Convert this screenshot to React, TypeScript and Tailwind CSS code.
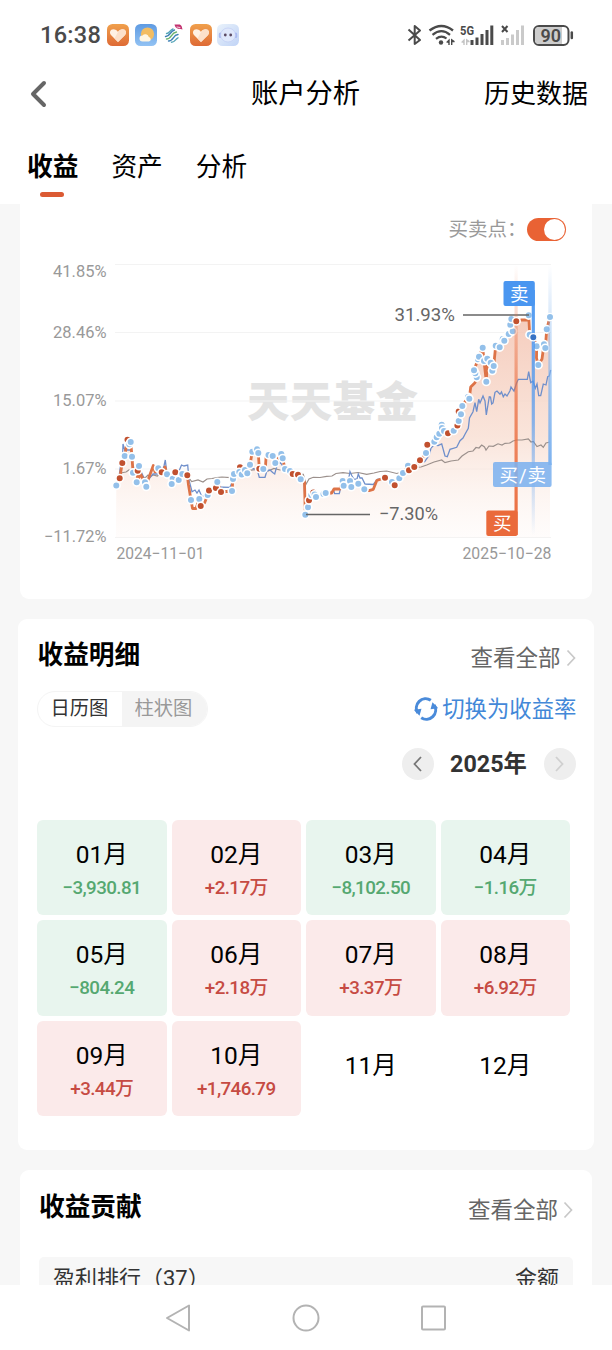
import clsx from 'clsx';

type Dot = [number, number, 'b' | 'r' | 'd' | '-'];

// Account curve. 'b' = sell, 'r' = buy, 'd' = selected, '-' = no trade on that day
const CURVE: Dot[] = [
    [116.3, 485.5, 'b'], [119.7, 478.3, 'r'], [122.3, 463, 'r'], [124.7, 456, 'b'], [127.5, 439.7, 'r'],
    [129.3, 444.3, 'b'], [130.7, 442, 'b'], [132, 456.7, 'b'], [133, 472.7, 'b'], [137.7, 470.7, 'r'],
    [139, 466, 'b'], [136.7, 482.3, 'b'], [140.5, 474, '-'], [143, 479, '-'], [145, 482.3, 'b'], [146.3, 486.7, 'b'],
    [148, 480, '-'], [153.3, 465.5, '-'], [155, 472, '-'], [158.3, 468.3, 'b'], [161.7, 472.3, 'r'],
    [165, 467, '-'], [167, 474.3, 'b'], [172.7, 478.7, 'b'], [171.7, 484, 'b'], [175.3, 472.3, 'r'],
    [178.7, 480, 'b'], [182.3, 474, 'b'], [187.3, 475.3, 'r'], [188.5, 485, '-'], [191, 500, 'b'],
    [192.5, 508.5, '-'], [196, 508.5, '-'], [199.3, 499, 'b'], [200.7, 506, 'r'], [204.5, 503, '-'],
    [207.7, 495, 'b'], [209, 490.5, 'r'], [215.9, 488, 'r'], [217.3, 482, 'b'], [221, 492, 'r'],
    [232, 491, 'b'], [233, 479, 'b'], [234, 474, 'b'], [240, 467.3, 'r'], [239.3, 472, 'b'],
    [241.7, 474.6, 'b'], [245, 470, 'b'], [247.3, 473.3, 'b'], [250, 464.7, 'b'], [252.3, 451.7, 'b'],
    [257, 449.3, 'b'], [258.3, 453, 'b'], [259.3, 468.7, 'r'], [263.3, 469, 'b'], [265.5, 466, '-'],
    [266, 458, '-'], [268.5, 455, 'b'], [272.7, 456, 'b'], [275.3, 463, 'b'], [281.3, 454, 'b'],
    [282.7, 458.3, 'b'], [285, 469, 'b'], [290, 471, 'b'], [292.7, 474, 'r'], [298, 474.7, 'r'],
    [300.7, 479.3, 'b'], [304.5, 482, '-'], [305.3, 514.7, 'b'], [308, 507.3, 'b'], [309, 500.3, 'r'],
    [311.3, 495, 'b'], [313.3, 492.5, 'r'], [314.6, 494.5, 'b'], [316, 497, 'b'], [323.5, 494, 'b'],
    [325.7, 493, 'b'], [331.7, 493, '-'], [334, 489, '-'], [340, 489, '-'], [342.7, 481, 'b'],
    [343.7, 485.7, 'b'], [350, 481, 'b'], [351.3, 487, 'b'], [358.3, 483.7, 'b'], [364.3, 489.3, 'b'],
    [369, 490.7, '-'], [373.3, 489.3, '-'], [376.8, 480.5, '-'], [385, 477.7, 'r'], [392, 482, 'b'],
    [394.7, 485.3, 'r'], [399.3, 478.3, 'b'], [403, 473, 'b'], [408, 465.7, 'b'], [409, 470.3, 'r'],
    [414.3, 467, 'r'], [420, 460.3, 'r'], [426, 453, 'b'], [427.3, 444.7, 'r'], [434.3, 441.7, 'b'],
    [436.7, 437.3, 'b'], [439.3, 433.7, 'b'], [441.7, 424.7, 'b'], [442, 428, 'b'], [444, 431, 'b'],
    [448, 433.3, 'r'], [453.7, 430.7, 'b'], [457.4, 425.5, 'r'], [458.7, 421, 'b'], [458.7, 411.500, 'r'],
    [461, 414.3, 'b'], [462.3, 406, 'b'], [468, 397, 'b'], [469.3, 398.7, 'b'], [470.7, 387, '-'],
    [475, 382.7, '-'], [476.7, 377.3, 'b'], [475.3, 373.3, 'b'], [474, 370.3, 'b'], [478, 359.3, 'b'],
    [479, 356.7, 'b'], [482.7, 347.7, 'b'], [484, 361, 'b'], [486.3, 381.7, 'b'], [487.3, 358.7, 'b'],
    [490.7, 362.7, 'b'], [492.3, 370.7, 'b'], [493.7, 366, 'b'], [495.7, 345.7, 'b'], [499.7, 347.3, 'b'],
    [502.7, 339, 'b'], [504.3, 340.7, 'b'], [508.7, 334, 'b'], [512.7, 331.3, 'b'], [510.3, 324.7, 'b'],
    [511.3, 319, 'b'], [516.3, 321.3, 'r'], [521, 320, '-'], [528, 320, '-'], [528.7, 315.3, 'b'],
    [529.7, 334.7, 'b'], [533.3, 337.3, 'd'], [536.7, 346.3, 'b'], [536.5, 358, '-'], [538.3, 365, 'b'],
    [542, 359, '-'], [544, 344.3, 'b'], [545.3, 348, 'b'], [546.7, 329.3, 'b'], [550, 317, 'b'],
];

const DOT_FILL = { b: '#93c0ea', r: '#c1502e', d: '#3873c4' };

const BLUE_LINE =
    'M116 485L119 477L121 462L122.5 460L123 444L125 451L126 450L131 450L132 463L135 470L139 467L144 478L148 480L153 474L158 474L161 471L164 466L165.3 460L166.5 470L170 477L175 474L179 471L180.7 467L181.5 465L184 466L187.7 465L189 480L192 491.7L195 490L197 493L199 490L202 497L206 494L210 490L216 487L230 487.3L233 480L238 472L246 468L257 469L259.3 477.3L265 477.3L267 470.5L270 470L272.7 472.5L274.7 474L276.7 466.7L280 462L284 468L290 471L300 478L304 481L305.5 513L309 500L315 494L325 494L331 493L333.7 490.7L334.7 493.7L339.3 493.7L341 486L346.7 480L349 477L350 471.7L352 476L354 479.3L357 479L358.3 474L360 478L362 478L365 484L373.3 484.5L377.3 479.3L385 478L395 484L402 473L410 469L420 462L424.7 461.7L429.3 455L431 448L434 445L438 445.5L441.7 443.8L445 456L447.3 456.7L450 449.3L456.7 447.3L460 440.7L463 438L465 434.3L468.3 428.3L469.5 418L473 411.7L475 402.7L476.7 411.7L478.7 399.3L480 403L483 396L485 401L486.3 415L489.3 396.7L490.5 397L491.7 404L493 403L495 392.3L497 391L500 394.3L501.5 392L503.3 396.7L505 394L507 396L510 390.7L511 387L512.7 389.3L514 391L516.7 382.7L518.3 379.3L527.3 379.3L528.7 371.7L530.7 382.7L533 381L535.3 388.3L537 384L538.7 395.7L540.7 395.7L543.3 384L546 385L547.7 376.7L549.3 376L550.7 370';

const GREY_LINE =
    'M116 484L119 476L122 472.7L126 472L129 470L135 472L142 476L145 478L148 475L150 477L153 475L157.3 476L162 472.5L170 474L178 472.5L187 472L189 478L191.7 481.5L198 480L203 482L207 479L212 478.5L216.7 477.7L222 477L230 477.7L238 474L246 471L253 469.8L262 469L268 471L274 468.5L280 470L286.7 469.3L292 472L300 474L303.3 474.3L306 484.3L309 479L313.3 477.3L320 477.5L326.7 476.3L332 476L336 473.5L343 472.7L350 473.5L358 472.5L366.7 474.3L374 473L380 471.5L386.7 471L396.7 473.5L402 472L409 469L415 467.3L421 467L426.7 465L434 462L441.7 460L445 462.7L451 461L458.3 460L462 456L468.3 451.7L473 451L476 447.5L479 448L481.7 445L484.5 447L486 450L489 446L493.3 446.3L498 443.8L502 445L505 443.3L510 443L513 441L516.7 440L522 440L528.3 438.8L531 442L533.3 441.5L537 446.5L541 445L543.3 447.3L546 443L550 442';

const linePath = CURVE.map(([x, y], i) => `${i ? 'L' : 'M'}${x} ${y}`).join('');

const Y_TICKS = [
    { label: '41.85%', line: 264.5, text: 277, x: 53 },
    { label: '28.46%', line: 332.5, text: 338, x: 53 },
    { label: '15.07%', line: 401, text: 406, x: 53 },
    { label: '1.67%', line: 469, text: 474, x: 62.5 },
    { label: '−11.72%', line: 537.5, text: 542, x: 44 },
];

const MONTHS = [
    { month: '01月', value: '-3,930.81' },
    { month: '02月', value: '+2.17万' },
    { month: '03月', value: '-8,102.50' },
    { month: '04月', value: '-1.16万' },
    { month: '05月', value: '-804.24' },
    { month: '06月', value: '+2.18万' },
    { month: '07月', value: '+3.37万' },
    { month: '08月', value: '+6.92万' },
    { month: '09月', value: '+3.44万' },
    { month: '10月', value: '+1,746.79' },
    { month: '11月' },
    { month: '12月' },
];

function HeartApp() {
    return (
        <svg width="22" height="22" viewBox="0 0 22 22">
            <defs>
                <linearGradient id="heartBg" x1="0" y1="0" x2="0" y2="1">
                    <stop offset="0" stopColor="#f0a04c" />
                    <stop offset="1" stopColor="#de6a35" />
                </linearGradient>
            </defs>
            <rect width="22" height="22" rx="5.5" fill="url(#heartBg)" />
            <path d="M11 18L4.200 11.200C1.900 8.600 3.200 5.200 6.300 5.200c2 0 3.700 1 4.700 2.800C12 6.200 13.700 5.200 15.700 5.200c3.100 0 4.400 3.400 2.100 6z" fill="#fff1e4" />
            <path d="M11 18L17.800 11.200c2.300-2.600 1-6-2.100-6-2 0-3.700 1-4.700 2.800L7.500 14.500z" fill="#fce0ca" />
        </svg>
    );
}

function WeatherApp() {
    return (
        <svg width="22" height="22" viewBox="0 0 22 22">
            <defs>
                <linearGradient id="skyBg" x1="0" y1="0" x2="0" y2="1">
                    <stop offset="0" stopColor="#5f9be2" />
                    <stop offset="1" stopColor="#92c2f3" />
                </linearGradient>
            </defs>
            <rect width="22" height="22" rx="5.500" fill="url(#skyBg)" />
            <circle cx="12.500" cy="10" r="6.600" fill="#f3bd62" />
            <path d="M7.500 17.500a3 3 0 0 1 0-6 3.600 3.600 0 0 1 6.300 1.500 2.300 2.300 0 0 1 .2 4.500z" fill="#fff6e4" />
        </svg>
    );
}

function MobileApp() {
    return (
        <svg width="22" height="22" viewBox="0 0 22 22" fill="none" strokeWidth="1.400" strokeLinecap="round">
            <path d="M4.500 9.500c2.500.5 3.500-3.500 6.500-4.500" stroke="#55a5b8" />
            <path d="M3.500 12.500c4.500.5 4.500-5.500 9-6.500" stroke="#3c7fb4" />
            <path d="M4.500 15c5.500 0 4-6 10-7" stroke="#6cb26c" />
            <path d="M6.500 17c5.500 0 4-6 9.500-6.500" stroke="#3c7fb4" />
            <path d="M9.500 18.300c3.500 0 4-3.500 6.500-4.500" stroke="#55a5b8" />
            <path d="M12.500.5h4.500c2.500 0 3 2.500 3.500 5-2-1-7 .5-8-5z" fill="#c3316f" />
            <path d="M15 3l3 .5" stroke="#fff" strokeWidth=".8" />
        </svg>
    );
}

function RobotApp() {
    return (
        <svg width="22" height="22" viewBox="0 0 22 22">
            <defs>
                <linearGradient id="botBg" x1="0" y1="0" x2="1" y2="1">
                    <stop offset="0" stopColor="#e9f2fb" />
                    <stop offset="1" stopColor="#c0d3f6" />
                </linearGradient>
            </defs>
            <rect width="22" height="22" rx="5.500" fill="url(#botBg)" />
            <rect x="1.800" y="8.500" width="3" height="5.500" rx="1.500" fill="#a9b9f0" />
            <rect x="17.200" y="8.500" width="3" height="5.500" rx="1.500" fill="#a9b9f0" />
            <ellipse cx="11" cy="11" rx="7.400" ry="7" fill="#dfe8fb" stroke="#bcc9f3" strokeWidth=".6" />
            <circle cx="8.300" cy="11" r="1.400" fill="#5b4a63" />
            <circle cx="13.700" cy="11" r="1.400" fill="#5b4a63" />
        </svg>
    );
}

function StatusBar() {
    return (
        <div className="flex h-[70px] items-center pl-[40px] pr-[38px] text-[#4a4a4a]">
            <span className="w-[67px] pt-px text-[23.5px] font-medium tracking-[0.3px]">16:38</span>
            <div className="flex items-center gap-[5.500px]">
                <HeartApp />
                <WeatherApp />
                <MobileApp />
                <HeartApp />
                <RobotApp />
            </div>
            <svg className="ml-auto" width="168" height="24" viewBox="406 23 168 24" fill="none" stroke="#4a4a4a">
                {/* bluetooth */}
                <path d="M408.500 29.500L420 40L414.700 44V26L420 30.500L408.500 40.500" strokeWidth="2" strokeLinejoin="round" />
                {/* wifi */}
                <path d="M429.500 30.500Q441.500 21.500 453 30.500" strokeWidth="2.400" />
                <path d="M432.500 34.800Q441.500 27.500 450 34.800M436 38.800Q441.500 34.500 446.500 38.500" strokeWidth="2.200" />
                <circle cx="441" cy="42.500" r="2.200" fill="#4a4a4a" stroke="none" />
                <path d="M449.700 38.500V45H448.300V43L446 42.300zM451 38.500L454.600 41V42.300H452.400V45H451z" fill="#4a4a4a" stroke="none" />
                {/* 5G */}
                <text x="460" y="35" fontSize="12" fontWeight="700" fill="#4a4a4a" stroke="none" textLength="14" lengthAdjust="spacingAndGlyphs">5G</text>
                <path d="M464.700 38.500V45H463.300V43L461 42.300zM466 38.500L469.600 41V42.300H467.400V45H466z" fill="#c4c4c4" stroke="none" />
                <path d="M472 45V40M477 45V37.500M482 45V34M487 45V30M491.800 45V25.500" strokeWidth="3" />
                <path d="M502 26L507.500 32M507.500 26L502 32" strokeWidth="2" />
                <path d="M502.500 45V40M507.500 45V38M512.500 45V34.500M517.500 45V30M522.500 45V25.500" stroke="#cacaca" strokeWidth="3" />
                {/* battery */}
                <rect x="534" y="26" width="34.500" height="19" rx="5" fill="#fff" strokeWidth="2" />
                <path d="M539 27h23v17h-23q-4 0-4-4v-9q0-4 4-4z" fill="#cdcdcd" stroke="none" />
                <path d="M571.800 32.500V38" strokeWidth="2.500" strokeLinecap="round" />
                <text x="540.500" y="42" fontSize="18.500" fontWeight="600" fill="#4a4a4a" stroke="none" textLength="20.500" lengthAdjust="spacingAndGlyphs">90</text>
            </svg>
        </div>
    );
}

function ProfitChart() {
    return (
        <svg width="572" height="320" viewBox="20 250 572 320" className="block">
            <defs>
                <linearGradient id="area" gradientUnits="userSpaceOnUse" x1="0" y1="315" x2="0" y2="537">
                    <stop offset="0" stopColor="#f3c3b1" stopOpacity="0.85" />
                    <stop offset="0.550" stopColor="#f8dccf" stopOpacity="0.75" />
                    <stop offset="1" stopColor="#fdf3ef" stopOpacity="0.250" />
                </linearGradient>
                <linearGradient id="buyBar" gradientUnits="userSpaceOnUse" x1="0" y1="265" x2="0" y2="535">
                    <stop offset="0" stopColor="#ea6a3b" stopOpacity="0" />
                    <stop offset="0.500" stopColor="#ea6a3b" stopOpacity="0.700" />
                    <stop offset="1" stopColor="#ea6a3b" />
                </linearGradient>
                <linearGradient id="sellBar" gradientUnits="userSpaceOnUse" x1="0" y1="282" x2="0" y2="535">
                    <stop offset="0" stopColor="#4a96f0" />
                    <stop offset="0.550" stopColor="#4a96f0" stopOpacity="0.650" />
                    <stop offset="1" stopColor="#4a96f0" stopOpacity="0" />
                </linearGradient>
                <linearGradient id="bothBar" gradientUnits="userSpaceOnUse" x1="0" y1="265" x2="0" y2="465">
                    <stop offset="0" stopColor="#7db2ef" stopOpacity="0" />
                    <stop offset="0.600" stopColor="#7db2ef" stopOpacity="0.700" />
                    <stop offset="1" stopColor="#7db2ef" />
                </linearGradient>
            </defs>

            <text x="247" y="417" fontSize="42.500" fontWeight="900" fill="#e3e3e3" textLength="171">天天基金</text>
            {Y_TICKS.map((t) => (
                <path key={t.label} d={`M115 ${t.line}H551`} stroke="#f3f3f3" strokeWidth="1" />
            ))}
            <g fill="#999" fontSize="16.500">
                {Y_TICKS.map((t) => (
                    <text key={t.label} x={t.x} y={t.text} textLength={106.5 - t.x} lengthAdjust="spacingAndGlyphs">{t.label}</text>
                ))}
                <text x="116.500" y="558.500" textLength="88" lengthAdjust="spacingAndGlyphs">2024−11−01</text>
                <text x="462.500" y="558.500" textLength="89" lengthAdjust="spacingAndGlyphs">2025−10−28</text>
            </g>

            <path d={`${linePath}V537.500H116Z`} fill="url(#area)" />
            <path d={GREY_LINE} fill="none" stroke="#9b908c" strokeWidth="1.200" />
            <path d={BLUE_LINE} fill="none" stroke="#6f8fcb" strokeWidth="1.300" />
            <path d={linePath} fill="none" stroke="#dd7347" strokeWidth="2.800" strokeLinejoin="round" />

            {CURVE.map(([x, y, kind], i) =>
                kind === '-' ? null : (
                    <circle key={i} cx={x} cy={y} r="3.800" fill={DOT_FILL[kind]} stroke="#fff" strokeWidth="1.600" />
                )
            )}

            <path d="M463 315H529M306 514.500H370" stroke="#666" strokeWidth="1.500" />
            <g fill="#666" fontSize="18.500">
                <text x="394.500" y="320.500" textLength="60.500" lengthAdjust="spacingAndGlyphs">31.93%</text>
                <text x="379" y="520" textLength="59" lengthAdjust="spacingAndGlyphs">−7.30%</text>
            </g>

            {/* trade markers */}
            <rect x="514.500" y="265" width="3.200" height="270" fill="url(#buyBar)" />
            <rect x="531.700" y="290" width="3.200" height="245" fill="url(#sellBar)" />
            <rect x="548.300" y="265" width="3.400" height="200" fill="url(#bothBar)" />
            <circle cx="516.300" cy="321.300" r="3.600" fill="#c1502e" stroke="#fff" strokeWidth="1.200" />
            <circle cx="533.300" cy="337.300" r="3.600" fill="#3873c4" stroke="#fff" strokeWidth="1.200" />
            <circle cx="550" cy="317" r="3.600" fill="#93c0ea" stroke="#fff" strokeWidth="1.200" />
            <rect x="503.500" y="281" width="31.300" height="25" rx="2" fill="#4a96f0" />
            <rect x="493" y="462" width="58.600" height="25" rx="2" fill="#7db2ef" fillOpacity="0.880" />
            <rect x="486.300" y="510.500" width="31.300" height="25.500" rx="2" fill="#ea6a3b" />
            <g fill="#fff" fontSize="18.500">
                <text x="510" y="300.500">卖</text>
                <text x="499.500" y="481.500" textLength="46.500">买/卖</text>
                <text x="493" y="530">买</text>
            </g>
        </svg>
    );
}

function SectionHeader({ title }: { title: string }) {
    return (
        <div className="flex h-[36px] items-start justify-between">
            <h2 className="text-[25.700px] leading-[36px] font-bold text-black">{title}</h2>
            <div className="flex items-center gap-[5px] pt-[4px] text-[22.500px] leading-[34px] text-[#666]">
                查看全部
                <svg width="10" height="18" viewBox="0 0 10 18" fill="none" stroke="#c8c8c8" strokeWidth="1.700">
                    <path d="M1.500 1.500L8.500 9L1.500 16.500" />
                </svg>
            </div>
        </div>
    );
}

function MonthCell({ month, value }: { month: string; value?: string }) {
    const loss = value?.startsWith('-');
    return (
        <div
            className={clsx(
                'flex h-[95.300px] flex-col items-center rounded-[6px]',
                !value && 'justify-center pb-[6px]',
                value && 'pt-[18px]',
                value && (loss ? 'bg-[#e8f5ee]' : 'bg-[#fbeaea]')
            )}
        >
            <div className="text-[24.500px] leading-[34px] text-black">{month}</div>
            {value && (
                <div className={clsx('text-[18.800px] leading-[32px] font-medium tracking-[-0.600px]', loss ? 'text-[#55a871]' : 'text-[#c64b43]')}>
                    {loss ? value.replace('-', '−') : value}
                </div>
            )}
        </div>
    );
}

export default function App() {
    return (
        <div className="flex h-[1350px] w-[612px] flex-col overflow-hidden bg-white font-[Roboto,'Noto_Sans_CJK_SC',sans-serif]">
            <StatusBar />

            <header className="flex h-[48px] items-center text-[26px] text-black">
                <div className="flex flex-1 pl-[30px]">
                    <svg width="18" height="28" viewBox="0 0 18 28" fill="none" stroke="#666" strokeWidth="4" strokeLinecap="round" strokeLinejoin="round">
                        <path d="M14 3L3 14L14 25" />
                    </svg>
                </div>
                <h1 className="mr-[7px] pt-px text-[27.300px]">账户分析</h1>
                <div className="flex-1 pr-[24px] text-right">历史数据</div>
            </header>

            <nav className="flex h-[86px] gap-[33px] pt-[30px] pl-[27px] text-[25.700px] leading-[38px] text-black">
                <div className="flex flex-col items-center">
                    <span className="font-bold">收益</span>
                    <span className="mt-[6px] mr-[2px] h-[4.500px] w-[24px] rounded-full bg-[#db5a33]" />
                </div>
                <span>资产</span>
                <span>分析</span>
            </nav>

            <main className="h-[1081px] overflow-hidden bg-[#f7f7f7]">
                <section className="mx-[20px] h-[395px] rounded-b-[9px] bg-white">
                    <div className="flex h-[46px] items-center justify-end pt-[4px] pr-[26px]">
                        <span className="pt-px text-[19.500px] text-[#999]">买卖点：</span>
                        <span className="flex h-[23px] w-[39.500px] items-center justify-end rounded-full bg-[#e96234] pr-[1px]">
                            <span className="size-[21px] rounded-full bg-white" />
                        </span>
                    </div>
                    <ProfitChart />
                </section>

                <section className="mt-[19.500px] mr-[18.500px] ml-[17.500px] h-[531.500px] rounded-[9px] bg-white pt-[18.500px] pr-[18px] pl-[20px]">
                    <SectionHeader title="收益明细" />
                    <div className="mt-[18px] -ml-px flex h-[36px] items-center justify-between">
                        <div className="flex h-[36px] overflow-hidden rounded-full border border-[#f4f4f4] text-[19.300px] leading-[33px]">
                            <span className="w-[84px] pl-[13px] text-[#333]">日历图</span>
                            <span className="w-[85px] bg-[#f4f4f4] pl-[13px] text-[#999]">柱状图</span>
                        </div>
                        <div className="-mr-px flex items-center gap-[4px] text-[22.400px] leading-[32px] text-[#4388d8]">
                            <svg width="24" height="24" viewBox="0 0 24 24" fill="none" stroke="#4a8bda" strokeWidth="3">
                                <path d="M16.800 3.300A9.300 9.300 0 0 0 3.800 16M7.200 20.700A9.300 9.300 0 0 0 20.200 8" />
                                <path d="M0 14.500L7.500 12.500L6.500 19.500zM24 9.500L16.500 11.500L17.500 4.500z" transform="rotate(8 12 12)" fill="#4a8bda" stroke="none" />
                            </svg>
                            切换为收益率
                        </div>
                    </div>
                    <div className="mt-[21px] flex h-[32px] items-center justify-end">
                        <span className="flex size-[32px] items-center justify-center rounded-full bg-[#eee]">
                            <svg width="9" height="16" viewBox="0 0 9 16" fill="none" stroke="#777" strokeWidth="1.800">
                                <path d="M8 1L1.500 8L8 15" />
                            </svg>
                        </span>
                        <span className="w-[110px] text-center text-[23.300px] leading-[32px] font-bold text-[#333]">2025年</span>
                        <span className="flex size-[32px] items-center justify-center rounded-full bg-[#eee]">
                            <svg width="9" height="16" viewBox="0 0 9 16" fill="none" stroke="#d0d0d0" strokeWidth="1.800">
                                <path d="M1 1L7.500 8L1 15" />
                            </svg>
                        </span>
                    </div>
                    <div className="mt-[39.800px] mr-[5.500px] -ml-[0.500px] grid grid-cols-4 gap-x-[5px] gap-y-[5.400px]">
                        {MONTHS.map((m) => (
                            <MonthCell key={m.month} month={m.month} value={m.value} />
                        ))}
                    </div>
                </section>

                <section className="mx-[20px] mt-[20px] h-[200px] rounded-t-[9px] bg-white px-[19px] pt-[19px]">
                    <SectionHeader title="收益贡献" />
                    <div className="mt-[31.500px] flex h-[60px] justify-between rounded-[5px] bg-[#f7f7f7] px-[14px] pt-[5px] text-[22px] leading-[34px] text-[#333]">
                        <span>盈利排行（37）</span>
                        <span>金额</span>
                    </div>
                </section>
            </main>

            <footer className="flex h-[65px] items-center justify-center gap-[101px]">
                <svg width="26" height="30" viewBox="0 0 26 30" fill="none" stroke="#b3b3b3" strokeWidth="2" strokeLinejoin="round">
                    <path d="M24 2.500V27.500L2 15Z" />
                </svg>
                <svg width="28" height="28" viewBox="0 0 28 28" fill="none" stroke="#b3b3b3" strokeWidth="2">
                    <circle cx="14" cy="14" r="12.500" />
                </svg>
                <svg width="26" height="26" viewBox="0 0 26 26" fill="none" stroke="#b3b3b3" strokeWidth="2">
                    <rect x="1" y="1.500" width="23" height="23" rx="1" />
                </svg>
            </footer>
        </div>
    );
}
